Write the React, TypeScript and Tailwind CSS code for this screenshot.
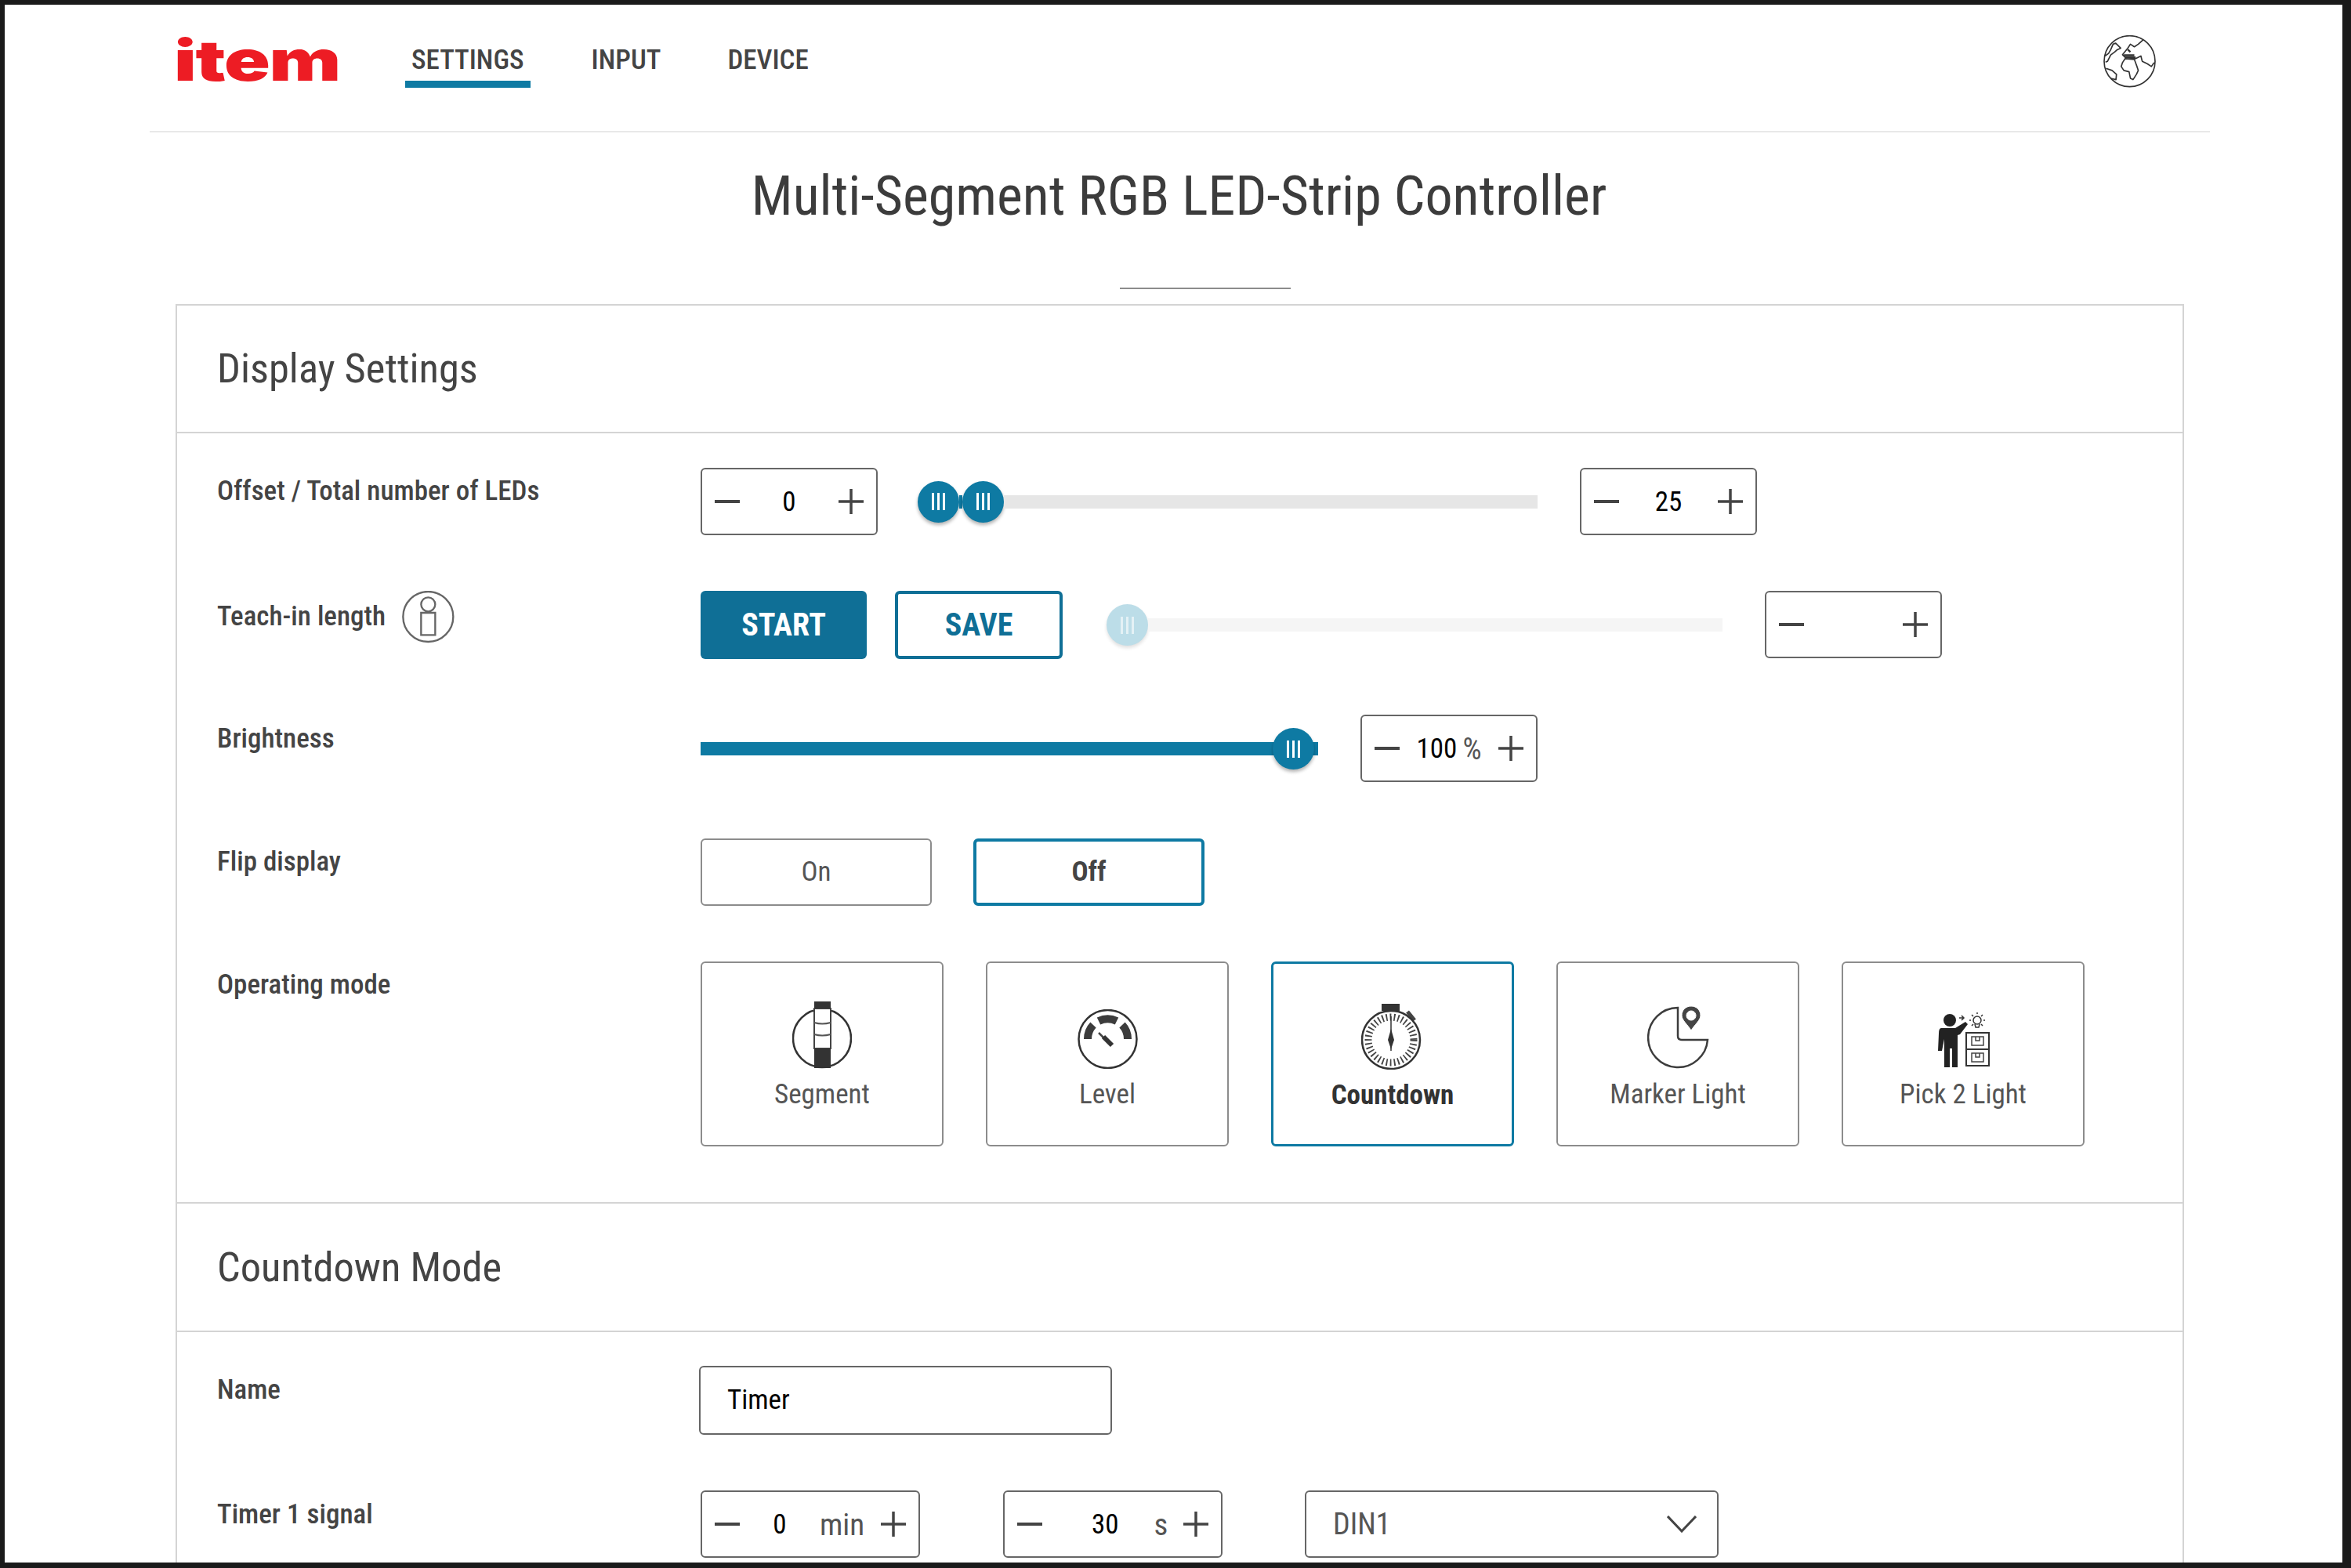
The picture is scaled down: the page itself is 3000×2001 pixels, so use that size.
import { ReactNode } from "react";

const Minus = () => (
  <svg width="34" height="6" viewBox="0 0 34 6" className="shrink-0">
    <path d="M1 3h32" stroke="#444" strokeWidth="4" />
  </svg>
);

const Plus = () => (
  <svg width="34" height="34" viewBox="0 0 34 34" className="shrink-0">
    <path d="M1 17h32M17 1v32" stroke="#444" strokeWidth="3.5" />
  </svg>
);

interface StepperProps {
  width: string;
  children?: ReactNode;
}

const Stepper = ({ width, children }: StepperProps) => (
  <div className={`${width} flex h-[86px] shrink-0 items-center rounded-[6px] border-2 border-[#666] px-[15px] text-[35px] text-black`}>
    <Minus />
    <div className="flex flex-1 items-center justify-center pt-[3px]">{children}</div>
    <Plus />
  </div>
);

const Thumb = ({ light }: { light?: boolean }) => (
  <div className={`flex h-[53px] w-[53px] shrink-0 items-center justify-center gap-[4px] rounded-full ${light ? "bg-[#bcdde8] shadow-[0_3px_4px_rgba(0,0,0,0.12)]" : "bg-[#0e7aa3] shadow-[0_3px_4px_rgba(0,0,0,0.3)]"}`}>
    <span className={`h-[22px] w-[3px] ${light ? "bg-[#e4f1f5]" : "bg-white"}`} />
    <span className={`h-[22px] w-[3px] ${light ? "bg-[#e4f1f5]" : "bg-white"}`} />
    <span className={`h-[22px] w-[3px] ${light ? "bg-[#e4f1f5]" : "bg-white"}`} />
  </div>
);

const Row = ({ label, extra, children, className, labelClass }: { label: string; extra?: ReactNode; children: ReactNode; className?: string; labelClass?: string }) => (
  <div className={`flex ${className ?? ""}`}>
    <div className={`flex w-[617px] shrink-0 items-center gap-[21px] text-[35px] font-medium text-[#444] ${labelClass ?? "h-[60px]"}`}>
      {label}
      {extra}
    </div>
    {children}
  </div>
);

const SectionHead = ({ title, className }: { title: string; className: string }) => (
  <div className={`flex items-center border-b-2 border-[#d4d4d4] pl-[51px] text-[52.5px] text-[#444] ${className}`}>{title}</div>
);

const Globe = () => (
  <svg width="67" height="67" viewBox="252 136 200 200" fill="none" stroke="#333" strokeWidth="5" strokeLinejoin="round">
    <circle cx="352" cy="235" r="97" />
    <path d="M258 215l14-10 8-14 9-21 10-4 19 19-13 6-10 9-15 11-12 24-8 3" />
    <path d="M262 262l23 8 17 15-2 20-20-5" />
    <path d="M405 152l-20 18-15 10-15-10-10 15-20 25 10 10 40 5 20-10 5 20 20 10 15 10 10-15" />
    <path d="M325 240l10-15 35 3 10 27 5 15-7 15-13 20-10-5-5-25-20-5-10-15z" />
    <path d="M330 212h40M335 220h40M345 190l10 10" strokeWidth="7" />
  </svg>
);

const InfoIcon = () => (
  <svg width="67" height="67" viewBox="765 48 201 201" fill="none" stroke="#666" strokeWidth="7">
    <circle cx="865" cy="147" r="96" />
    <circle cx="865" cy="100" r="27" />
    <path d="M838 132h54v85h-54z" />
  </svg>
);

const SegmentIcon = () => (
  <svg width="76" height="86" viewBox="0 0 76 86" fill="none">
    <circle cx="38" cy="47" r="37" stroke="#333" strokeWidth="2.5" />
    <path d="M28 9h21v51h-21z" fill="#fff" stroke="#444" strokeWidth="2" />
    <path d="M28 0h21v9h-21zM28 60h21v25h-21z" fill="#333" />
    <path d="M28 27q10 3 21 0M28 42q10 3 21 0" stroke="#555" strokeWidth="2" />
  </svg>
);

const LevelIcon = () => (
  <svg width="77" height="76" viewBox="0 0 77 76" fill="none">
    <circle cx="38.5" cy="38" r="37" stroke="#333" strokeWidth="2.5" />
    <path d="M13 38A26 26 0 0 1 20 20M27 15A26 26 0 0 1 50 15M57 20A26 26 0 0 1 64 38" stroke="#3c3c3c" strokeWidth="10" />
    <path d="M27 30l8 8" stroke="#444" strokeWidth="2.5" />
    <path d="M33 35l11 11" stroke="#333" strokeWidth="6" />
  </svg>
);

const CountdownIcon = () => (
  <svg width="80" height="84" viewBox="0 0 80 84" fill="none">
    <path d="M26 0h23v9h-23z" fill="#333" />
    <path d="M59 10l9 11" stroke="#444" strokeWidth="5" />
    <circle cx="38" cy="46" r="37" stroke="#333" strokeWidth="2.5" />
    <circle cx="38" cy="46" r="29" stroke="#444" strokeWidth="9" strokeDasharray="1.8 3.2" />
    <path d="M38 16v44" stroke="#333" strokeWidth="1.5" />
    <path d="M38 32l4 14-4 12-4-12z" fill="#333" />
  </svg>
);

const MarkerIcon = () => (
  <svg width="79" height="80" viewBox="0 0 79 80" fill="none">
    <path d="M39 2A38 38 0 1 0 77 43H44Q39 43 39 38Z" stroke="#3c3c3c" strokeWidth="2.5" />
    <path fillRule="evenodd" d="M56 0c7 0 12 5 12 12 0 6-8 12-12 19-4-7-12-13-12-19 0-7 5-12 12-12zm0 6a6 6 0 1 0 .01 0z" fill="#444" stroke="#fff" strokeWidth="1" />
  </svg>
);

const PickIcon = () => (
  <svg width="72" height="72" viewBox="0 0 72 72" fill="none">
    <circle cx="19" cy="10" r="8" fill="#222" />
    <path d="M8 20h18l13-8 3 3-10 13-3 1v41h-7V46h-3v24h-7V34l-3 15H4l1-22q0-7 3-7z" fill="#222" />
    <path d="M31 7h6M34 4l3 3-3 3" stroke="#333" strokeWidth="1.5" />
    <circle cx="54" cy="10" r="5" stroke="#333" strokeWidth="1.5" />
    <path d="M51 15l1 4h4l1-4M54 0v2M44 10h2M62 10h2M47 3l2 2M61 3l-2 2M47 17l2-2M61 17l-2-2" stroke="#333" strokeWidth="1.5" />
    <path d="M40 26h29v42h-29zM40 47h29" stroke="#333" strokeWidth="2" />
    <path d="M47 31h15v11h-15zM47 52h15v11h-15zM52 31v5h5v-5M52 52v5h5v-5" stroke="#444" strokeWidth="1.5" />
  </svg>
);

const ModeCard = ({ label, icon, active }: { label: string; icon: ReactNode; active?: boolean }) => (
  <div className={`flex h-[236px] w-[310px] shrink-0 flex-col items-center rounded-[6px] pt-[49px] text-[35px] ${active ? "border-[3px] border-[#0e7aa3] font-bold text-[#333]" : "border-2 border-[#8c8c8c] text-[#555]"}`}>
    <div className="flex h-[86px] items-end">{icon}</div>
    <div className="mt-[7px]">{label}</div>
  </div>
);

const App = () => {
  return (
    <div className="h-[2001px] w-[3000px] overflow-hidden bg-[#1a1a1a] pb-[7px] pl-[6px] pr-[11px] pt-[6px] [font-family:Roboto,sans-serif] [font-stretch:75%]">
      <div className="h-full overflow-hidden bg-white">
        {/* header */}
        <div className="ml-[185px] mr-[169px] flex h-[163px] items-start border-b-2 border-[#e8e8e8] pl-[35px] pr-[69px]">
          <div className="-ml-[4px] mt-[35px] w-[209px] origin-left scale-x-[1.35] text-[72px] font-black leading-[1] tracking-[-1px] text-[#ed1c24] [font-family:Inter,sans-serif] [font-stretch:100%]">item</div>
          <nav className="ml-[86px] mt-[44px] flex gap-[78px] text-[35px] font-medium text-[#444]">
            <div className="h-[62px] border-b-[9px] border-[#0e7aa3] px-[8px] leading-[53px]">SETTINGS</div>
            <div className="leading-[53px]">INPUT</div>
            <div className="ml-[7px] leading-[53px]">DEVICE</div>
          </nav>
          <div className="ml-auto mt-[39px]">
            <Globe />
          </div>
        </div>

        {/* title */}
        <h1 className="mt-[38px] pl-[14px] text-center text-[70px] font-normal leading-[86px] text-[#3c3c3c]">Multi-Segment RGB LED-Strip Controller</h1>
        <div className="ml-[1423px] mt-[74px] h-[2px] w-[218px] bg-[#8c8c8c]" />

        {/* card */}
        <div className="ml-[218px] mr-[202px] mt-[19px] border-2 border-[#d4d4d4] pb-[100px]">
          <SectionHead title="Display Settings" className="h-[163px]" />
          <div className="pl-[51px] pt-[44px]">
            <Row label="Offset / Total number of LEDs" labelClass="h-[60px]">
              <Stepper width="w-[226px]">0</Stepper>
              <div className="ml-[51px] flex h-[86px] w-[791px] items-center">
                <Thumb />
                <div className="h-[17px] w-[4px] bg-[#0e7aa3]" />
                <Thumb />
                <div className="h-[17px] flex-1 bg-[#e6e6e6]" />
              </div>
              <div className="ml-[54px]">
                <Stepper width="w-[226px]">25</Stepper>
              </div>
            </Row>
            <Row label="Teach-in length" extra={<InfoIcon />} labelClass="h-[66px]" className="mt-[71px]">
              <div className="flex h-[87px] w-[212px] items-center justify-center rounded-[6px] bg-[#0f6f96] text-[40px] font-bold text-white">START</div>
              <div className="ml-[36px] flex h-[87px] w-[214px] items-center justify-center rounded-[6px] border-[4px] border-[#0f6f96] text-[40px] font-bold text-[#0f6f96]">SAVE</div>
              <div className="ml-[56px] flex h-[87px] w-[786px] items-center">
                <Thumb light />
                <div className="h-[17px] flex-1 bg-[#f5f5f5]" />
              </div>
              <div className="ml-[54px]">
                <Stepper width="w-[226px]" />
              </div>
            </Row>
            <Row label="Brightness" labelClass="h-[62px]" className="mt-[71px]">
              <div className="relative flex h-[86px] w-[788px] items-center">
                <div className="h-[17px] w-full bg-[#0e7aa3]" />
                <div className="absolute right-[5px] top-[17px]">
                  <Thumb />
                </div>
              </div>
              <div className="ml-[54px]">
                <Stepper width="w-[226px]">
                  <span>100</span>
                  <span className="ml-[7px] text-[38px] text-[#555]">%</span>
                </Stepper>
              </div>
            </Row>
            <Row label="Flip display" className="mt-[72px]">
              <div className="flex h-[86px] w-[295px] items-center justify-center rounded-[6px] border-2 border-[#8c8c8c] text-[35px] text-[#555]">On</div>
              <div className="ml-[53px] flex h-[86px] w-[295px] items-center justify-center rounded-[6px] border-[4px] border-[#0e7aa3] text-[35px] font-bold text-[#444]">Off</div>
            </Row>
            <Row label="Operating mode" className="mt-[71px]">
              <div className="flex gap-[54px]">
                <ModeCard label="Segment" icon={<SegmentIcon />} />
                <ModeCard label="Level" icon={<LevelIcon />} />
                <ModeCard label="Countdown" icon={<CountdownIcon />} active />
                <ModeCard label="Marker Light" icon={<MarkerIcon />} />
                <ModeCard label="Pick 2 Light" icon={<PickIcon />} />
              </div>
            </Row>
          </div>
          <SectionHead title="Countdown Mode" className="mt-[71px] h-[166px] border-t-2" />
          <div className="pl-[51px] pt-[43px]">
            <Row label="Name" labelClass="h-[62px]">
              <div className="-ml-[2px] flex h-[88px] w-[527px] items-center rounded-[6px] border-2 border-[#666] pl-[34px] text-[35px] text-black">Timer</div>
            </Row>
            <Row label="Timer 1 signal" labelClass="h-[62px]" className="mt-[71px]">
              <Stepper width="w-[280px]">
                <div className="flex w-full items-center pl-[39px]">
                  <span className="w-[22px] text-center">0</span>
                  <span className="ml-[40px] text-[39px] text-[#555]">min</span>
                </div>
              </Stepper>
              <div className="ml-[106px]">
                <Stepper width="w-[280px]">
                  <div className="flex w-full items-center pl-[62px]">
                    <span>30</span>
                    <span className="ml-[45px] text-[39px] text-[#555]">s</span>
                  </div>
                </Stepper>
              </div>
              <div className="ml-[105px] flex h-[86px] w-[528px] items-center justify-between rounded-[6px] border-2 border-[#666] pl-[34px] pr-[26px] text-[38px] text-[#555]">
                DIN1
                <svg width="38" height="22" viewBox="0 0 38 22" fill="none">
                  <path d="M1 1l18 19L37 1" stroke="#444" strokeWidth="3" />
                </svg>
              </div>
            </Row>
          </div>
        </div>
      </div>
    </div>
  );
};

export default App;
